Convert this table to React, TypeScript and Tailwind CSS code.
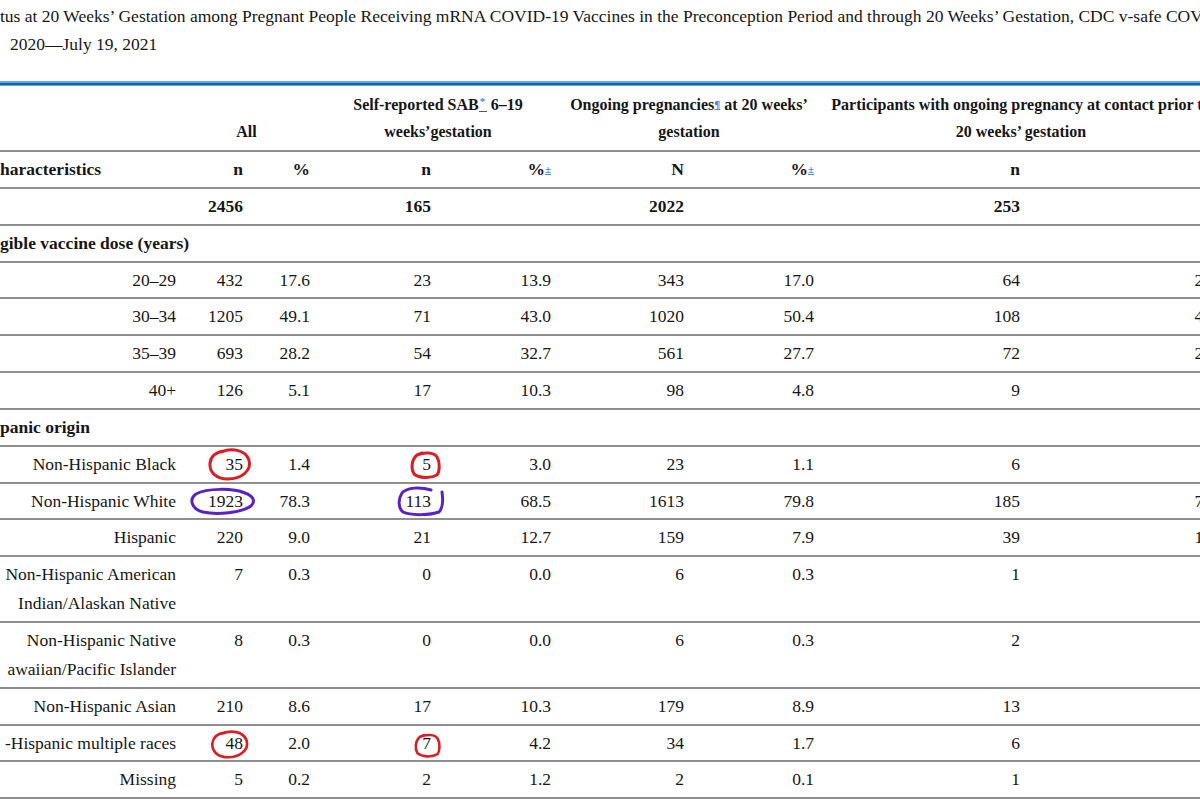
import React from "react";

const GRID =
  "grid grid-cols-[185px_65px_68px_120px_120px_132px_130px_206px_214px] w-[1240px]";
const PR = [
  "pr-[9px]",
  "pr-[7px]",
  "pr-[8px]",
  "pr-[7px]",
  "pr-[7px]",
  "pr-[6px]",
  "pr-[6px]",
  "pr-[6px]",
  "pr-[15px]",
];
const ROW = "border-b-2 border-[#8f8f8f]";

type Circle = { col: number; cls: string; color: string; d: string; vb: string };

const RED = "#d91f26";
const PURPLE = "#5a22c4";

function Blue({ children }: { children: React.ReactNode }) {
  return (
    <sup className="text-[11px] text-[#3a8ad6] underline decoration-[#3a8ad6] relative -top-[2px]">
      {children}
    </sup>
  );
}

function DataRow({
  label,
  values,
  circles = [],
}: {
  label: React.ReactNode;
  values: string[];
  circles?: Circle[];
}) {
  const cells = [label, ...values];
  return (
    <div className={`${GRID} ${ROW}`}>
      {cells.map((c, i) => {
        const circ = circles.filter((x) => x.col === i);
        return (
          <div
            key={i}
            className={`relative flex justify-end whitespace-nowrap py-[3px] leading-[28.85px] text-right ${PR[i]}`}
          >
            <div>{c}</div>
            {circ.map((k, j) => (
              <svg
                key={j}
                viewBox={k.vb}
                className={`absolute overflow-visible pointer-events-none ${k.cls}`}
                fill="none"
              >
                <path
                  d={k.d}
                  stroke={k.color}
                  strokeWidth={3}
                  strokeLinecap="round"
                  strokeLinejoin="round"
                />
              </svg>
            ))}
          </div>
        );
      })}
    </div>
  );
}

function SectionRow({ label }: { label: string }) {
  return (
    <div className={`${ROW} w-[1240px] py-[3px] leading-[28.85px] font-bold whitespace-nowrap`}>
      {label}
    </div>
  );
}

export default function App() {
  const ages: [string, string[]][] = [
    ["20–29", ["432", "17.6", "23", "13.9", "343", "17.0", "64", "25.3"]],
    ["30–34", ["1205", "49.1", "71", "43.0", "1020", "50.4", "108", "42.7"]],
    ["35–39", ["693", "28.2", "54", "32.7", "561", "27.7", "72", "28.5"]],
    ["40+", ["126", "5.1", "17", "10.3", "98", "4.8", "9", "3.6"]],
  ];

  const redLoop =
    "M14 4 C 24 0, 38 1, 42 12 C 45 23, 34 31, 21 31 C 9 31, 2 24, 3 15 C 4 8, 9 4, 17 3";
  const redBox =
    "M7 4 C 14 1, 24 1, 27 6 C 30 11, 30 20, 27 24 C 20 28, 9 27, 4 23 C 1 18, 1 9, 7 4 L 12 2";
  const purpleWide =
    "M56 6 C 44 1, 18 1, 7 7 C 0 12, 2 22, 14 25 C 28 28, 52 26, 62 19 C 67 14, 64 9, 56 6 L 50 4";
  const purple113 =
    "M34 4 C 24 1, 10 1, 5 7 C 1 13, 1 22, 6 26 C 14 30, 34 29, 42 26 C 46 22, 46 13, 45 6";

  return (
    <div className="w-[1200px] h-[800px] overflow-hidden bg-white text-[#161616] font-['Liberation_Serif','Times_New_Roman',serif] text-[17.5px]">
      <div className="pt-[2px] leading-[28px] whitespace-nowrap">
        <div>
          tus at 20 Weeks’ Gestation among Pregnant People Receiving mRNA COVID-19 Vaccines in the
          Preconception Period and through 20 Weeks’ Gestation, CDC v-safe COVID-19 Pregnancy Registry
        </div>
        <div className="pl-[10px]">2020—July 19, 2021</div>
      </div>

      <div className="mt-[23px] w-[1240px] h-[5px] bg-[#1f5fa6] border-t-2 border-b border-[#5aa8e6]" />

      {/* header */}
      <div className={`${GRID} ${ROW} font-bold text-[16px] leading-[27px]`}>
        <div className="py-[5px]" />
        <div className="col-span-2 flex items-end justify-center pr-[10px] pb-[5px]">All</div>
        <div className="col-span-2 py-[5px] text-center whitespace-nowrap">
          Self-reported SAB
          <span className="relative inline-block w-[8px] h-[14px] align-baseline">
            <span className="absolute left-[1px] -top-[8px] text-[11px] text-[#3a8ad6]">*</span>
            <span className="absolute left-0 bottom-[-2px] w-full h-[1.5px] bg-[#555]" />
          </span>{" "}
          6–19
          <br />
          weeks’gestation
        </div>
        <div className="col-span-2 py-[5px] text-center whitespace-nowrap">
          Ongoing pregnancies<Blue>¶</Blue> at 20 weeks’
          <br />
          gestation
        </div>
        <div className="col-span-2 py-[5px] pr-[18px] text-center whitespace-nowrap">
          Participants with ongoing pregnancy at contact prior to
          <br />
          20 weeks’ gestation
        </div>
      </div>

      <div className={`${GRID} ${ROW} font-bold`}>
        <div className="py-[3px] leading-[28.85px] whitespace-nowrap">haracteristics</div>
        {[
          "n",
          "%",
          "n",
          <>
            %<Blue>±</Blue>
          </>,
          "N",
          <>
            %<Blue>±</Blue>
          </>,
          "n",
          <>
            %<Blue>±</Blue>
          </>,
        ].map((v, i) => (
          <div
            key={i}
            className={`py-[3px] leading-[28.85px] text-right whitespace-nowrap ${PR[i + 1]}`}
          >
            {v}
          </div>
        ))}
      </div>

      <div className={`${GRID} ${ROW} font-bold`}>
        {["", "2456", "", "165", "", "2022", "", "253", ""].map((v, i) => (
          <div
            key={i}
            className={`py-[3px] leading-[28.85px] text-right whitespace-nowrap ${PR[i]}`}
          >
            {v || "\u00a0"}
          </div>
        ))}
      </div>

      <SectionRow label="gible vaccine dose (years)" />
      {ages.map(([l, v]) => (
        <DataRow key={l} label={l} values={v} />
      ))}

      <SectionRow label="panic origin" />
      <DataRow
        label="Non-Hispanic Black"
        values={["35", "1.4", "5", "3.0", "23", "1.1", "6", "2.4"]}
        circles={[
          { col: 1, cls: "left-[22px] top-[1px] w-[45px] h-[33px]", vb: "0 0 45 33", color: RED, d: redLoop },
          { col: 3, cls: "left-[92px] top-[4px] w-[31px] h-[28px]", vb: "0 0 31 28", color: RED, d: redBox },
        ]}
      />
      <DataRow
        label="Non-Hispanic White"
        values={["1923", "78.3", "113", "68.5", "1613", "79.8", "185", "73.1"]}
        circles={[
          { col: 1, cls: "left-[4px] top-[3px] w-[66px] h-[28px]", vb: "0 0 66 28", color: PURPLE, d: purpleWide },
          { col: 3, cls: "left-[79px] top-[2px] w-[48px] h-[31px]", vb: "0 0 48 31", color: PURPLE, d: purple113 },
        ]}
      />
      <DataRow label="Hispanic" values={["220", "9.0", "21", "12.7", "159", "7.9", "39", "15.4"]} />
      <DataRow
        label={
          <>
            Non-Hispanic American
            <br />
            Indian/Alaskan Native
          </>
        }
        values={["7", "0.3", "0", "0.0", "6", "0.3", "1", "0.4"]}
      />
      <DataRow
        label={
          <>
            Non-Hispanic Native
            <br />
            awaiian/Pacific Islander
          </>
        }
        values={["8", "0.3", "0", "0.0", "6", "0.3", "2", "0.8"]}
      />
      <DataRow label="Non-Hispanic Asian" values={["210", "8.6", "17", "10.3", "179", "8.9", "13", "5.1"]} />
      <DataRow
        label="-Hispanic multiple races"
        values={["48", "2.0", "7", "4.2", "34", "1.7", "6", "2.4"]}
        circles={[
          { col: 1, cls: "left-[22px] top-[4px] w-[45px] h-[29px]", vb: "0 0 45 33", color: RED, d: redLoop },
          { col: 3, cls: "left-[96px] top-[7px] w-[27px] h-[25px]", vb: "0 0 31 28", color: RED, d: redBox },
        ]}
      />
      <DataRow label="Missing" values={["5", "0.2", "2", "1.2", "2", "0.1", "1", "0.4"]} />
    </div>
  );
}
